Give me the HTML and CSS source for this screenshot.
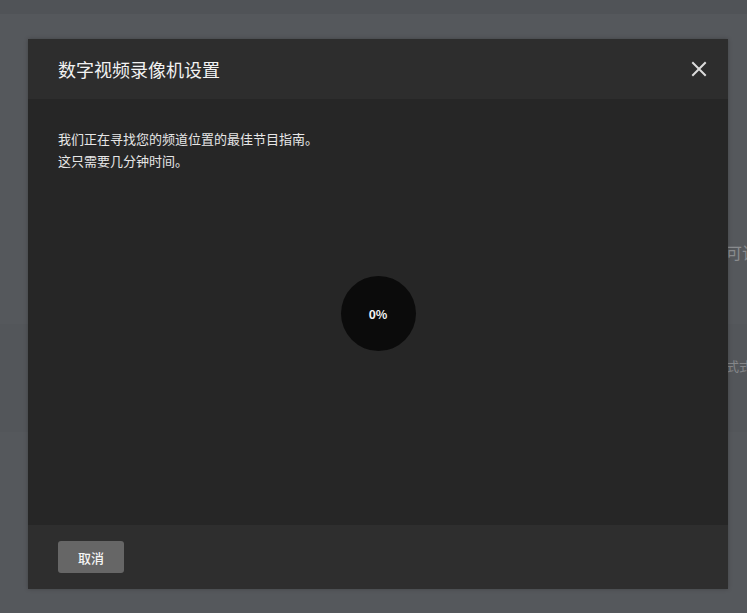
FILE: index.html
```html
<!DOCTYPE html>
<html lang="zh-CN">
<head>
<meta charset="utf-8">
<title>数字视频录像机设置</title>
<link rel="stylesheet" href="styles.css">
</head>
<body>
<div class="backdrop">
  <div class="bg-top"></div>
  <div class="bg-main">
    <div class="bg-row bg-row-1"><span class="bg-text-lg">可该</span></div>
    <div class="bg-row bg-row-2"><span class="bg-text-sm">式式</span></div>
  </div>
</div>
<div class="modal" role="dialog" aria-labelledby="dlg-title">
  <div class="modal-header">
    <h1 id="dlg-title" class="modal-title">数字视频录像机设置</h1>
    <button class="close-btn" aria-label="关闭">
      <svg width="16" height="16" viewBox="0 0 16 16"><path d="M2 2L14 14M14 2L2 14" stroke="#dcdcdc" stroke-width="2" stroke-linecap="square" fill="none"/></svg>
    </button>
  </div>
  <div class="modal-body">
    <p class="message">我们正在寻找您的频道位置的最佳节目指南。<br>这只需要几分钟时间。</p>
    <div class="progress-area">
      <div class="progress-circle">0%</div>
    </div>
  </div>
  <div class="modal-footer">
    <button class="btn-cancel">取消</button>
  </div>
</div>
</body>
</html>
```
FILE: styles.css
```css
html, body {
  margin: 0;
  padding: 0;
  height: 100%;
}
body {
  background: #55585c;
  font-family: "Noto Sans CJK SC", "Noto Sans", "Liberation Sans", sans-serif;
  color: #eeeeee;
  overflow: hidden;
}
.backdrop {
  display: flex;
  flex-direction: column;
  height: 100%;
}
.bg-top {
  height: 14px;
  background: #505357;
}
.bg-main {
  flex: 1;
  display: flex;
  flex-direction: column;
}
.bg-row {
  padding-left: 726px;
  white-space: nowrap;
  overflow: hidden;
}
.bg-row-1 {
  margin-top: 226px;
  height: 84px;
}
.bg-row-2 {
  background: #53565a;
  padding-top: 28px;
  height: 80px;
}
.bg-text-lg {
  font-size: 16px;
  color: #8a8c8f;
}
.bg-text-sm {
  font-size: 13px;
  color: #85878a;
}
.modal {
  position: absolute;
  left: 28px;
  top: 39px;
  width: 700px;
  height: 550px;
  display: flex;
  flex-direction: column;
  background: #262626;
  box-shadow: 0 0 4px rgba(0, 0, 0, 0.25);
}
.modal-header {
  height: 60px;
  background: #2d2d2d;
  display: flex;
  align-items: center;
  justify-content: space-between;
  padding: 0 21px 0 30px;
  flex-shrink: 0;
}
.modal-title {
  margin: 0;
  font-size: 18px;
  font-weight: 400;
  color: #f2f2f2;
  line-height: 24px;
}
.close-btn {
  background: none;
  border: none;
  padding: 0;
  width: 16px;
  height: 16px;
  display: flex;
  cursor: pointer;
}
.modal-body {
  flex: 1;
  display: flex;
  flex-direction: column;
  padding: 29px 30px 0 30px;
}
.message {
  margin: 0;
  font-size: 13px;
  line-height: 22px;
  color: #e6e6e6;
}
.progress-area {
  flex: 1;
  display: flex;
  align-items: center;
  justify-content: center;
  padding-bottom: 70px;
}
.progress-circle {
  width: 75px;
  height: 75px;
  border-radius: 50%;
  background: #0b0b0b;
  display: flex;
  align-items: center;
  justify-content: center;
  font-size: 12px;
  font-weight: 700;
  color: #f4f4f4;
}
.modal-footer {
  height: 64px;
  background: #2e2e2e;
  display: flex;
  align-items: center;
  padding: 0 30px;
  flex-shrink: 0;
}
.btn-cancel {
  width: 66px;
  height: 32px;
  border: none;
  border-radius: 3px;
  background: #666666;
  color: #f5f5f5;
  font-family: "Noto Sans CJK SC", "Noto Sans", sans-serif;
  font-size: 13px;
  font-weight: 500;
  cursor: pointer;
}
```
